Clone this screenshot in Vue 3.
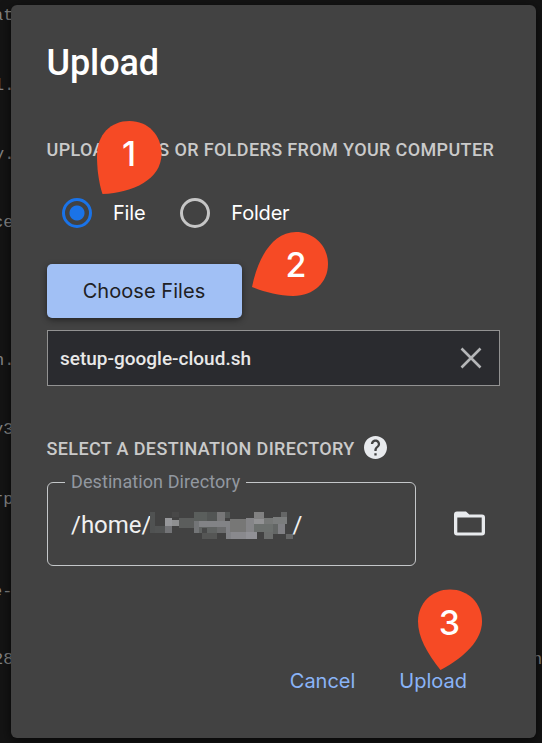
<script setup>
import { ref } from 'vue'

const mode = ref('file')

const terminal = [
  { t: 'at', x: -7, y: 6 },
  { t: 'l.', x: -6, y: 76 },
  { t: 'y.', x: -6, y: 145 },
  { t: 'ce', x: -7, y: 213 },
  { t: 'n.', x: -6, y: 351 },
  { t: 'y3', x: -7, y: 420 },
  { t: 'rp', x: -7, y: 490 },
  { t: 'e-', x: -8, y: 582 },
  { t: '28', x: -7, y: 650 },
  { t: 'n', x: 532, y: 650 },
]

// Redaction mosaic: x, y, width, height, fill
const mosaic = [
  [0, 0, 5, 21, '#505252'], [5, 14, 10, 7, '#525454'],
  [15, 6, 7, 8, '#96979a'], [15, 14, 7, 7, '#737477'],
  [22, 0, 7, 5, '#484848'], [22, 8, 7, 6, '#8e8f90'],
  [29, 6, 15, 10, '#5b5d5c'],
  [44, 0, 13, 9, '#5a5e5c'], [57, 0, 10, 9, '#525554'],
  [67, 0, 8, 9, '#777778'], [75, 0, 5, 6, '#555857'],
  [44, 9, 5, 12, '#737577'], [49, 9, 31, 6, '#828386'],
  [49, 15, 18, 6, '#606362'], [52, 16, 5, 5, '#484949'],
  [52, 21, 15, 6, '#555655'], [67, 15, 9, 6, '#6b6c6d'],
  [76, 15, 5, 12, '#818286'], [80, 7, 16, 13, '#777776'],
  [96, 6, 8, 14, '#858588'], [81, 20, 15, 7, '#89898d'],
  [96, 20, 11, 7, '#919196'], [104, 0, 10, 7, '#818181'],
  [104, 7, 10, 5, '#929294'], [104, 12, 20, 8, '#6c706e'],
  [114, 6, 9, 6, '#767877'], [123, 5, 14, 7, '#7b7d7d'],
  [131, 0, 6, 5, '#656666'], [114, 20, 9, 7, '#6b6d6c'],
  [123, 12, 5, 10, '#636665'], [128, 12, 7, 10, '#808084'],
  [136, 22, 7, 5, '#656666'],
]
</script>

<template>
  <main class="screen">
    <div class="terminal" aria-hidden="true">
      <span v-for="(l, i) in terminal" :key="i" :style="{ left: l.x + 'px', top: l.y + 'px' }">{{ l.t }}</span>
    </div>

    <section class="dialog" role="dialog" aria-label="Upload">
      <h1>Upload</h1>
      <h2 class="source">UPLOAD FILES OR FOLDERS FROM YOUR COMPUTER</h2>

      <div class="radios">
        <label class="option" @click="mode = 'file'">
          <span class="radio" :class="{ on: mode === 'file' }"></span><span>File</span>
        </label>
        <label class="option" @click="mode = 'folder'">
          <span class="radio" :class="{ on: mode === 'folder' }"></span><span>Folder</span>
        </label>
      </div>

      <button class="choose"><span>Choose Files</span></button>

      <div class="chosen">
        <span>setup-google-cloud.sh</span>
        <svg width="22" height="22" viewBox="0 0 22 22"><path d="M1.5 1.5 20.5 20.5M20.5 1.5 1.5 20.5" stroke="#b5b6b8" stroke-width="2.6" fill="none" /></svg>
      </div>

      <div class="dest-head">
        <h2>SELECT A DESTINATION DIRECTORY</h2>
        <svg width="23" height="23" viewBox="2 2 20 20"><path fill="#e8eaed" d="M12 2C6.48 2 2 6.48 2 12s4.48 10 10 10 10-4.48 10-10S17.52 2 12 2zm1 17h-2v-2h2v2zm2.07-7.75-.9.92C13.45 12.9 13 13.5 13 15h-2v-.5c0-1.1.45-2.1 1.17-2.83l1.24-1.26c.37-.36.59-.86.59-1.41 0-1.1-.9-2-2-2s-2 .9-2 2H8c0-2.21 1.79-4 4-4s4 1.79 4 4c0 .88-.36 1.68-.93 2.25z" /></svg>
      </div>

      <div class="dest-row">
        <fieldset class="field">
          <legend>Destination Directory</legend>
          <div class="path">
            <span>/home/</span>
            <svg class="mosaic" width="143" height="27" viewBox="0 0 143 27" shape-rendering="crispEdges">
              <rect v-for="(m, i) in mosaic" :key="i" :x="m[0]" :y="m[1]" :width="m[2]" :height="m[3]" :fill="m[4]" />
            </svg>
            <span>/</span>
          </div>
        </fieldset>
        <svg class="folder" width="31" height="25" viewBox="0 0 31 25"><path fill="#e8eaed" fill-rule="evenodd" d="M3 .5h9l3.300 3H28a3 3 0 0 1 3 3V21.500a3 3 0 0 1-3 3H3a3 3 0 0 1-3-3v-18a3 3 0 0 1 3-3zM3.300 6.500v15h24.400v-15z" /></svg>
      </div>

      <div class="actions">
        <button class="cancel">Cancel</button>
        <button class="upload">Upload</button>
      </div>
    </section>

    <svg class="pins" width="542" height="743" viewBox="0 0 542 743">
      <g fill="#f64a25">
        <path d="M97 156C97 134 111 121 129.500 121S161.500 135 161.500 154C161.500 179 133 193 102.500 194C98.500 182 97 168 97 156Z" />
        <path d="M252 287C258 257 273 232 296 232C314 232 328 246 328 264S314 296 293 296C279 296 264 292 252 287Z" />
        <path d="M418 621.500C418 603 432 589.500 450 589.500S482 603 482 621.500C482 640 465 657 440.500 670C427 653 418 637 418 621.500Z" />
      </g>
      <g class="digits">
        <text x="129" y="166">1</text>
        <text x="296" y="277">2</text>
        <text x="449.500" y="635">3</text>
      </g>
    </svg>
  </main>
</template>

<style>
body { margin: 0; background: #141414; }
</style>

<style scoped>
.screen {
  position: relative;
  box-sizing: border-box;
  width: 542px;
  height: 743px;
  padding: 5px 6px 5px 11px;
  overflow: hidden;
  background: #141414;
  font-family: Roboto, sans-serif;
}
.terminal span {
  position: absolute;
  font: 17px/20px "Liberation Mono", monospace;
  color: #858585;
  white-space: pre;
}
.dialog {
  position: relative;
  box-sizing: border-box;
  width: 525px;
  height: 733px;
  padding: 36px 36px 0;
  border-radius: 6px;
  background: #424242;
  box-shadow: 0 3px 12px #000a;
}
h1, h2 { margin: 0; white-space: nowrap; }
h1 { margin-left: -0.5px; font-size: 36px; line-height: 44px; font-weight: 500; letter-spacing: -0.1px; color: #fff; }
h2 { font-size: 18px; line-height: 24px; font-weight: 500; letter-spacing: 0.37px; color: #cacaca; }
.source { margin-top: 53px; margin-left: -0.5px; }
.radios { display: flex; gap: 35px; margin: 36px 0 0 15px; }
.option {
  display: flex;
  align-items: center;
  gap: 21px;
  height: 30px;
  font: 20px/30px Inter, sans-serif;
  color: #fff;
}
.option > span:last-child { letter-spacing: -0.2px; }
.radio {
  box-sizing: border-box;
  width: 30px;
  height: 30px;
  border: 3px solid #c6c6c6;
  border-radius: 50%;
}
.radio.on { border-color: #1a73e8; background: radial-gradient(circle, #1a73e8 7px, transparent 8px); }
button { padding: 0; border: 0; background: none; font: 20px/24px Inter, sans-serif; white-space: nowrap; }
.choose {
  display: block;
  width: 195px;
  height: 54px;
  margin-top: 36px;
  border-radius: 5px;
  background: #a1c0f5;
  color: #202124;
  letter-spacing: 0.05px;
  box-shadow: 0 2px 6px #0007;
}
.choose span { margin-left: -1px; }
.chosen {
  display: flex;
  align-items: center;
  justify-content: space-between;
  box-sizing: border-box;
  width: 453px;
  height: 56px;
  margin-top: 12px;
  padding: 0 17px 0 12px;
  border: 1px solid #929292;
  background: #2a2b2f;
  color: #e8e8e8;
  font-size: 19px;
  font-weight: 500;
}
.dest-head { display: flex; align-items: center; gap: 9px; height: 24px; margin-top: 49px; }
.dest-head h2 { margin: 3px 0 0 -0.5px; }
.dest-row { display: flex; align-items: center; gap: 38px; margin-top: 12px; }
.field {
  box-sizing: border-box;
  width: 369px;
  height: 95px;
  min-width: 0;
  margin: 0;
  padding: 0 0 0 23px;
  border: 1px solid #c4c7c9;
  border-radius: 6px;
}
legend { margin-left: -6px; padding: 0 6px; font-size: 18px; line-height: 22px; letter-spacing: 0.09px; color: #9298a0; }
.path {
  display: flex;
  align-items: center;
  margin-top: 17px;
  font-size: 24px;
  line-height: 30px;
  color: #f0f0f0;
}
.mosaic { margin: 0 -1px; }
.folder { margin-top: 10px; }
.actions { display: flex; justify-content: flex-end; gap: 44px; margin: 103px 33px 0 0; }
.actions button { color: #8ab4f8; }
.pins { position: absolute; top: 0; left: 0; pointer-events: none; }
.digits { fill: #fff; font: 450 34px Inter, sans-serif; text-anchor: middle; }
</style>
